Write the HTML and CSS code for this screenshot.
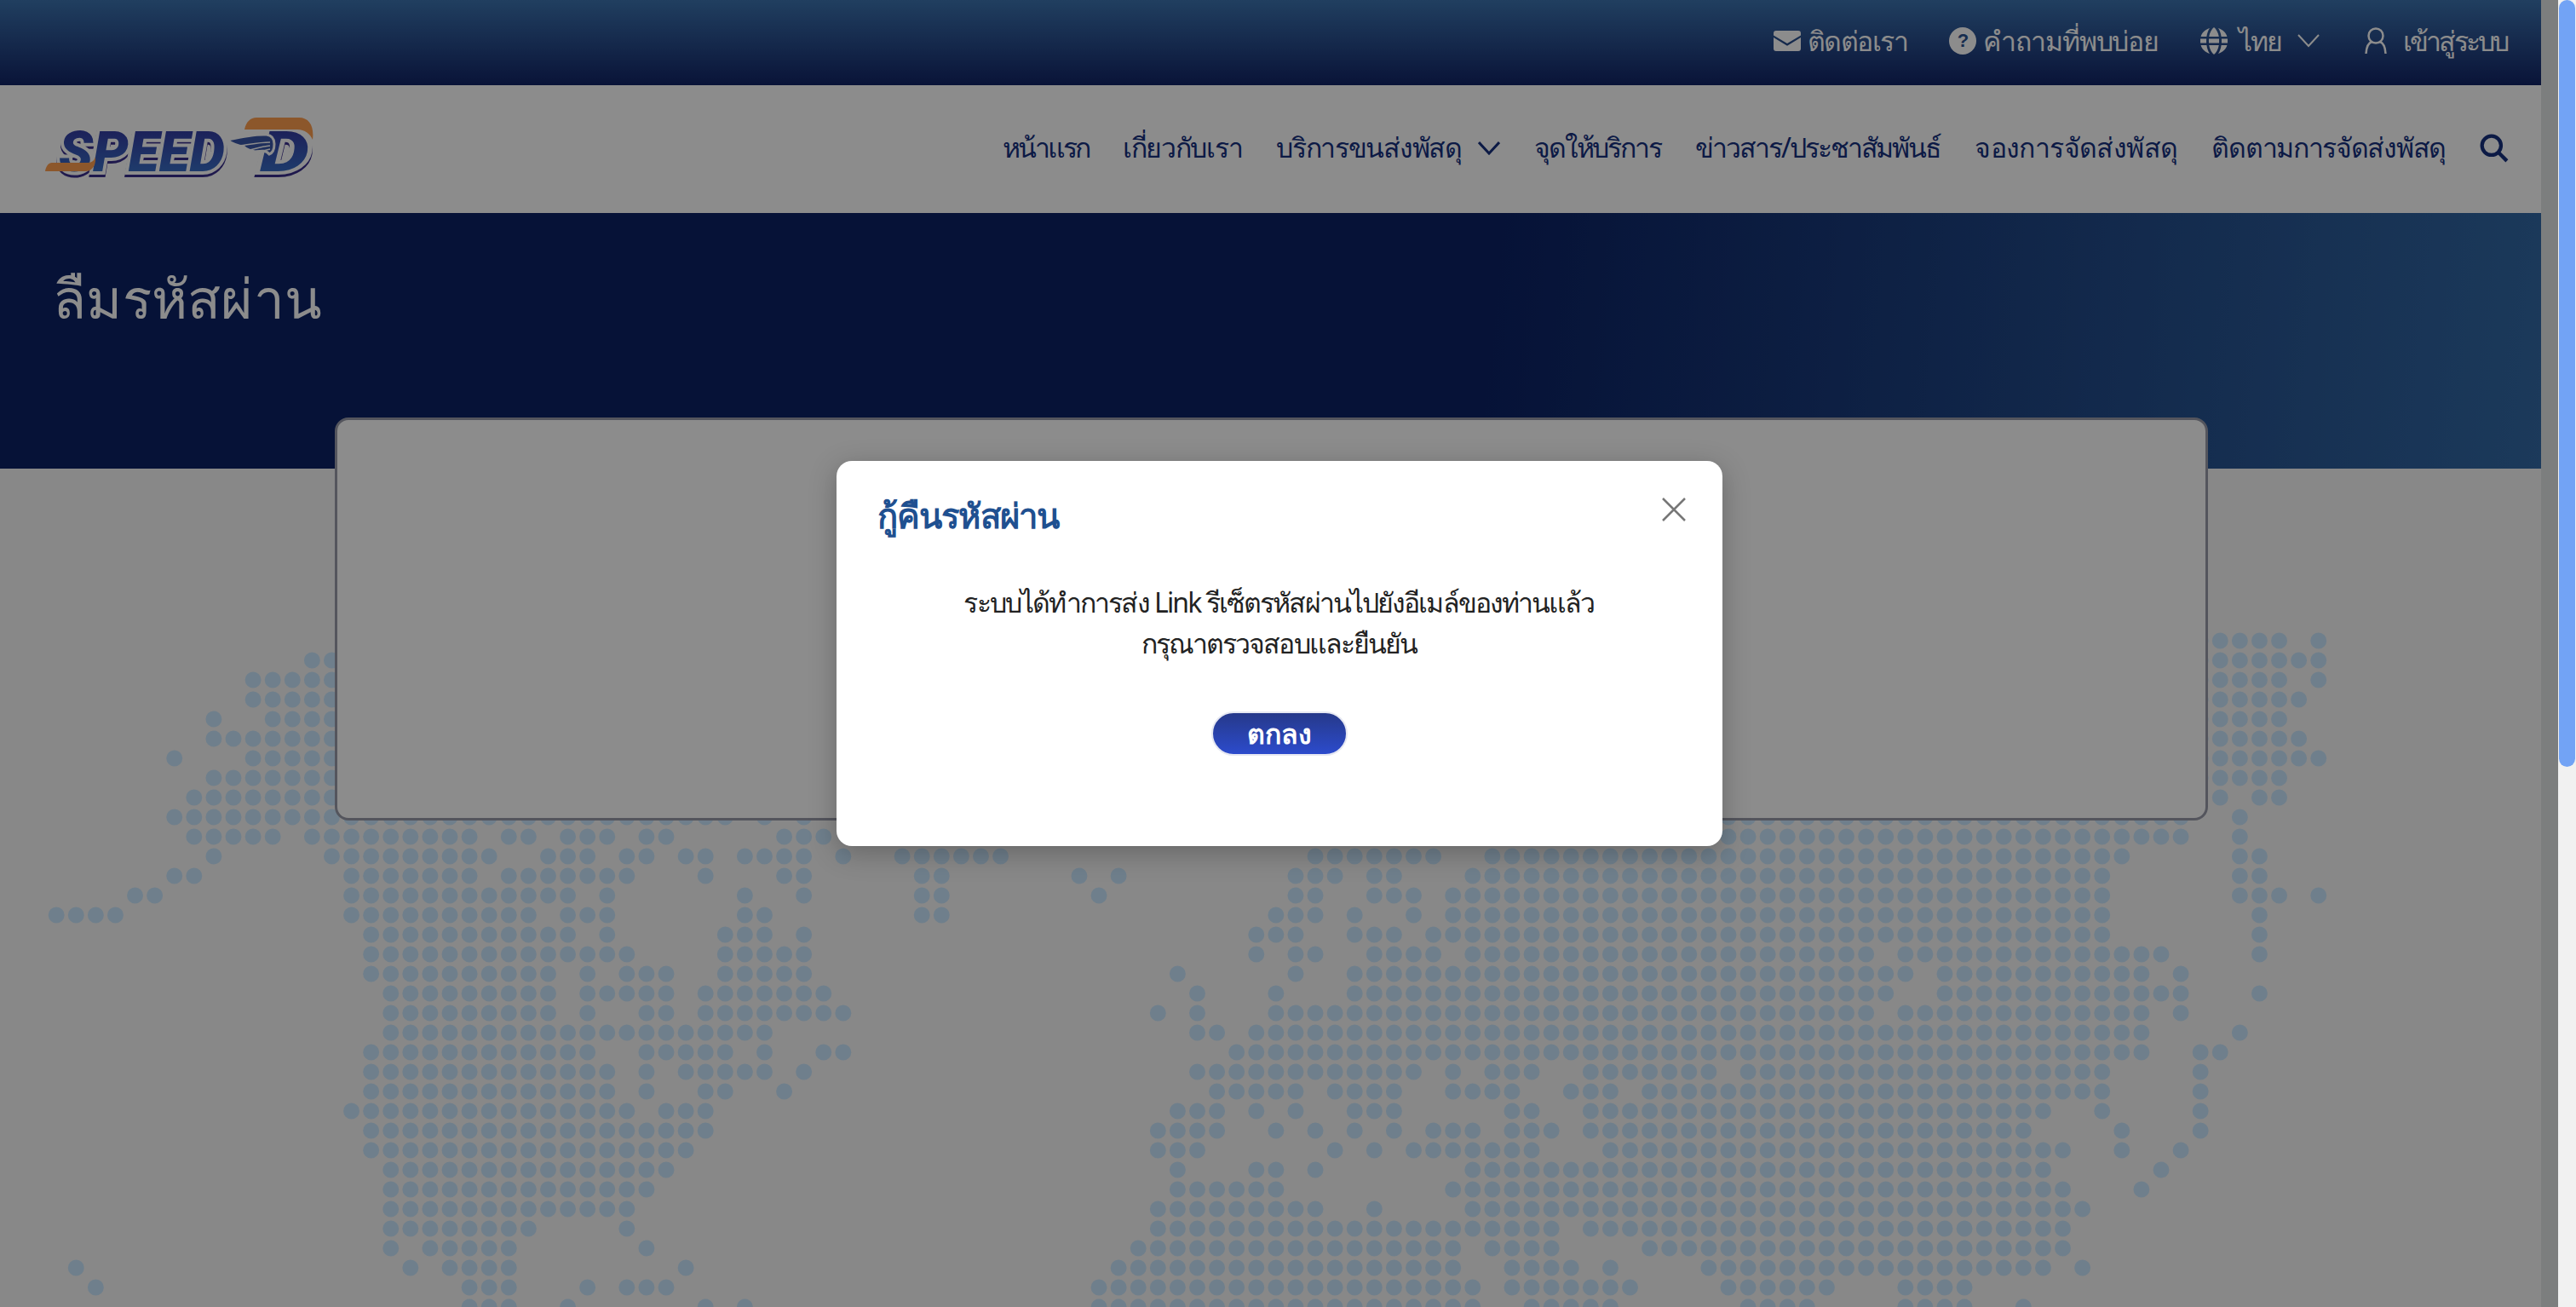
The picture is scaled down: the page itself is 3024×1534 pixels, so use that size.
FILE: index.html

```html
<!DOCTYPE html>
<html lang="th">
<head>
  <meta charset="UTF-8" />
  <meta name="viewport" content="width=device-width, initial-scale=1.0" />
  <title>ลืมรหัสผ่าน</title>
  <link rel="stylesheet" href="styles.css">
</head>
<body>
  <div class="shell">
    <div class="page">
      <div class="topbar">
        <a class="top-link top-contact">
          <svg class="top-icon" viewBox="0 0 32 24"><path d="M3 0h26a3 3 0 0 1 3 3v2.500L16 15 0 5.500V3a3 3 0 0 1 3-3zM0 8l16 9.800L32 8v13a3 3 0 0 1-3 3H3a3 3 0 0 1-3-3z"/></svg>
          ติดต่อเรา
        </a>
        <a class="top-link">
          <svg class="top-icon" viewBox="0 0 32 32"><circle cx="16" cy="16" r="16"/><text class="help-mark" x="16" y="23" text-anchor="middle">?</text></svg>
          คำถามที่พบบ่อย
        </a>
        <a class="top-link top-lang">
          <svg class="top-icon" viewBox="0 0 32 32"><path d="M11 1C5.500 2.800 1.800 6.500.600 11h6.800C8 7 9.200 3.500 11 1zM21 1c1.800 2.500 3 6 3.600 10h6.800C30.200 6.500 26.500 2.800 21 1zM16 0c-2.500 2-5 6-5.800 11h11.600C21 6 18.500 2 16 0zM0 13.500v5h7.100a50 50 0 0 1 0-5zM10 13.500a46 46 0 0 0 0 5h12a46 46 0 0 0 0-5zM24.900 13.500a50 50 0 0 1 0 5H32v-5zM.600 21c1.200 4.500 4.900 8.200 10.400 10-1.800-2.500-3-6-3.600-10zM10.200 21c.800 5 3.300 9 5.800 11 2.500-2 5-6 5.800-11zM24.600 21c-.600 4-1.800 7.500-3.600 10 5.500-1.800 9.200-5.500 10.400-10z"/></svg>
          ไทย
          <svg class="chevron" viewBox="0 0 26 16"><path d="M1 1l12 13L25 1"/></svg>
        </a>
        <a class="top-link top-login">
          <svg class="user-icon" viewBox="0 0 26 32"><circle cx="13" cy="10" r="8.500"/><path d="M1.500 31c.5-8 3.500-13 7-14M24.500 31c-.5-8-3.500-13-7-14"/></svg>
          เข้าสู่ระบบ
        </a>
      </div>

      <div class="navbar">
        <svg class="logo" viewBox="0 -10 330 100">
          <defs>
            <linearGradient id="logoBlue" x1="0" y1="0" x2="0" y2="1">
              <stop offset="0" stop-color="#33309a"/>
              <stop offset="1" stop-color="#3a7ccf"/>
            </linearGradient>
          </defs>
          <text class="logo-word" x="24" y="67">SPEED</text>
          <text class="logo-word" transform="translate(260 67) scale(1.4 1)">D</text>
          <path class="logo-orange" d="M16 57h42c5 0 8-3 9-7 1 9-3 17-12 17H8c1-6 4-10 8-10zM242 18c2-9 7-14 14-14h50c12 0 18 10 16 26-3-7-9-12-18-12z"/>
          <path class="logo-wing" d="M222 30c14-3 32-7 46-6 6 1 9 5 9 11 0 7-3 11-6 12-4-5-9-4-16-3-7-1-12-4-14-6-6 0-15-4-19-8z"/>
          <path class="logo-feather" d="M236 37c10-1 22-4 36-4M244 43c9-2 18-5 28-6M254 47c6-3 12-5 18-6"/>
        </svg>
        <nav class="menu">
          <a class="narrower">หน้าแรก</a>
          <a>เกี่ยวกับเรา</a>
          <a class="menu-drop">บริการขนส่งพัสดุ
            <svg class="chevron chevron-dark" viewBox="0 0 26 16"><path d="M1 1l12 13L25 1"/></svg>
          </a>
          <a class="narrow">จุดให้บริการ</a>
          <a class="narrow">ข่าวสาร/ประชาสัมพันธ์</a>
          <a class="wider">จองการจัดส่งพัสดุ</a>
          <a>ติดตามการจัดส่งพัสดุ</a>
          <svg class="search-icon" viewBox="0 0 32 32"><circle cx="13" cy="13" r="10.500"/><path d="M21 21l9 9"/></svg>
        </nav>
      </div>

      <div class="hero">
        <h1>ลืมรหัสผ่าน</h1>
      </div>

      <div class="content">
        <svg class="world-map" viewBox="-2 -1 120 37" preserveAspectRatio="none">
          <path d="M13 1H14.010M10 2H14.010M10 3H14.010M8 4h.01M11 4H14.010M8 5H14.010M6 6h.01M10 6H14.010M8 7H14.010M7 8H14.010M6 9H34.010M36 9h.01M38 9h.01M85 9H108.010M111 9h.01
            M7 10H11.010M13 10H21.010M23 10H24.010M26 10H28.010M30 10H31.010M37 10H39.010M85 10H108.010M111 10h.01
            M8 11h.01M14 11H22.010M25 11H27.010M29 11H30.010M32 11H33.010M35 11H38.010M40 11h.01M43 11H48.010M64 11H70.010M73 11H105.010M111 11H112.010
            M6 12H7.010M15 12H21.010M23 12H29.010M33 12h.01M37 12H38.010M44 12H45.010M52 12h.01M54 12h.01M63 12H65.010M67 12H68.010M72 12H104.010M111 12H112.010
            M4 13H5.010M15 13H26.010M28 13h.01M35 13h.01M38 13h.01M44 13H45.010M53 13h.01M63 13H64.010M67 13H69.010M71 13H104.010M111 13H113.010M115 13h.01
            M0 14H3.010M15 14H24.010M26 14H28.010M35 14H36.010M44 14H45.010M62 14H64.010M66 14h.01M69 14h.01M71 14H104.010M112 14h.01
            M16 15H26.010M28 15h.01M34 15H36.010M38 15h.01M61 15H63.010M66 15H68.010M70 15H104.010M112 15h.01
            M16 16H29.010M34 16H38.010M61 16h.01M63 16H64.010M67 16H70.010M72 16H92.010M94 16H107.010M112 16h.01
            M16 17H25.010M27 17h.01M29 17H31.010M34 17H38.010M57 17h.01M63 17h.01M66 17H94.010M96 17H106.010M108 17h.01
            M17 18H25.010M27 18H31.010M33 18H39.010M58 18h.01M62 18h.01M66 18H93.010M96 18H108.010M112 18h.01
            M17 19H25.010M27 19h.01M30 19H31.010M33 19H40.010M56 19h.01M58 19h.01M62 19H92.010M94 19H106.010M108 19h.01
            M17 20H36.010M58 20H59.010M61 20H106.010M111 20h.01
            M16 21H27.010M30 21H34.010M36 21h.01M39 21H40.010M60 21H106.010M109 21H110.010
            M16 22H28.010M30 22h.01M32 22H36.010M38 22h.01M58 22H69.010M71 22h.01M73 22H75.010M78 22H84.010M86 22H104.010M109 22h.01
            M16 23H28.010M30 23h.01M33 23H34.010M37 23h.01M59 23H63.010M65 23H68.010M71 23H74.010M77 23H79.010M81 23H104.010M109 23h.01
            M15 24H29.010M31 24H33.010M57 24H59.010M61 24h.01M63 24h.01M66 24H68.010M74 24H75.010M78 24H101.010M104 24h.01M109 24h.01
            M16 25H33.010M56 25H59.010M62 25h.01M64 25h.01M66 25h.01M68 25h.01M70 25H72.010M74 25H76.010M78 25H100.010M105 25h.01M109 25h.01
            M16 26H32.010M56 26H58.010M65 26h.01M67 26h.01M69 26H75.010M79 26H102.010M105 26h.01M108 26h.01
            M17 27H31.010M57 27h.01M61 27H62.010M64 27h.01M72 27H101.010M107 27h.01
            M17 28H30.010M57 28H62.010M71 28H102.010M106 28h.01
            M17 29H29.010M56 29H64.010M67 29h.01M72 29H103.010
            M17 30H24.010M29 30h.01M56 30H76.010M78 30H102.010
            M17 31h.01M19 31H23.010M30 31h.01M55 31H71.010M73 31H76.010M81 31H102.010
            M18 32h.01M20 32H23.010M1 32h.01M32 32h.01M54 32H71.010M74 32H77.010M79 32h.01M84 32H101.010M103 32h.01
            M2 33h.01M21 33H23.010M27 33h.01M29 33H31.010M53 33H72.010M74 33H80.010M85 33H90.010M94 33H97.010
            M21 34H23.010M26 34h.01M33 34h.01M35 34h.01M53 34H72.010M75 34H79.010M86 34H89.010M94 34H97.010M100 34h.01
            M109 0H113.010M115 0h.01M109 1H115.010M109 2H113.010M115 2h.01M109 3H114.010M109 4H113.010M109 5H114.010M109 6H115.010M109 7H113.010M110 8h.01M112 8H113.010"/>
        </svg>
        <div class="card"></div>
      </div>
    </div>

    <div class="overlay">
      <div class="modal">
        <div class="modal-head">
          <h2>กู้คืนรหัสผ่าน</h2>
          <svg class="close-icon" viewBox="0 0 28 28"><path d="M1 1l26 26M27 1L1 27"/></svg>
        </div>
        <div class="modal-body">
          <p>ระบบได้ทำการส่ง Link รีเซ็ตรหัสผ่านไปยังอีเมล์ของท่านแล้ว</p>
          <p>กรุณาตรวจสอบและยืนยัน</p>
          <button>ตกลง</button>
        </div>
      </div>
    </div>
  </div>

  <div class="scrollbar"><div class="thumb"></div></div>
</body>
</html>
```

FILE: styles.css

```css
body {
  margin: 0;
  height: 100vh;
  display: flex;
  overflow: hidden;
  font-family: 'Noto Sans', 'Noto Sans CJK SC', 'DejaVu Sans', sans-serif;
  color: #222;
}
.shell {
  flex: 1;
  position: relative;
  padding-right: 20px;
  background: #e2e5e5;
  overflow: hidden;
}
.page {
  height: 100%;
  background: #f7f7f7;
  overflow: hidden;
}

.topbar {
  height: 100px;
  box-sizing: border-box;
  padding: 0 40px 4px 0;
  display: flex;
  justify-content: flex-end;
  align-items: center;
  gap: 49px;
  background: linear-gradient(#3c73af, #122466);
  color: #fff;
  font-size: 32px;
  letter-spacing: -1.1px;
}
.top-link {
  display: flex;
  align-items: center;
  gap: 8px;
}
.top-contact { letter-spacing: -1.5px; }
.top-lang {
  gap: 13px;
  letter-spacing: -2px;
}
.top-login {
  gap: 19px;
  margin-left: 4px;
  letter-spacing: -2.900px;
}
.top-icon {
  width: 32px;
  height: 32px;
  fill: #fff;
}
.help-mark {
  font-family: 'Liberation Sans', sans-serif;
  font-size: 22px;
  font-weight: bold;
  fill: #2a5290;
}
.chevron {
  width: 26px;
  height: 16px;
  margin-left: 6px;
  fill: none;
  stroke: #fff;
  stroke-width: 2;
}
.chevron-dark {
  margin-left: 19px;
  stroke: #16307f;
  stroke-width: 3;
}
.user-icon {
  width: 26px;
  height: 32px;
  fill: none;
  stroke: #fff;
  stroke-width: 2.500;
}

.navbar {
  height: 150px;
  box-sizing: border-box;
  display: flex;
  justify-content: space-between;
  align-items: center;
  padding: 0 38px 3px 45px;
  background: #fff;
}
.logo {
  width: 330px;
  height: 100px;
}
.logo-word {
  font-family: Roboto, sans-serif;
  font-size: 66px;
  font-weight: 900;
  font-style: italic;
  fill: url(#logoBlue);
  stroke: #fff;
  stroke-width: 8;
  paint-order: stroke;
  filter: drop-shadow(0 3px 0 #3a2f8c);
}
.logo-orange { fill: #ff9e4f; }
.logo-wing {
  fill: #3a56a8;
  stroke: #fff;
  stroke-width: 3;
}
.logo-feather {
  fill: none;
  stroke: #fff;
  stroke-width: 1.500;
}
.menu {
  display: flex;
  align-items: center;
  gap: 40px;
  color: #16307f;
  font-size: 32px;
  letter-spacing: -1.3px;
}
.menu .narrow { letter-spacing: -2.050px; }
.menu .narrower { letter-spacing: -2.900px; }
.menu .wider { letter-spacing: -.6px; }
.menu-drop {
  display: flex;
  align-items: center;
}
.search-icon {
  width: 34px;
  height: 34px;
  fill: none;
  stroke: #16307f;
  stroke-width: 4;
}

.hero {
  height: 300px;
  box-sizing: border-box;
  padding: 52px 62px 0;
  background: linear-gradient(96deg, #0b2164 58%, #336aa6 100%);
  color: #fff;
}
.hero h1 {
  margin: 0;
  font-size: 64px;
  font-weight: 500;
  line-height: 96px;
  letter-spacing: .3px;
}

/* map sits behind the card, dots are zero length dashes on each run */
.content {
  display: flow-root;
  position: relative;
  height: 984px;
}
.world-map {
  position: absolute;
  left: 20px;
  top: 179px;
  width: 2771px;
  height: 851px;
  fill: none;
  stroke: #cae8ff;
  stroke-width: .82;
  stroke-linecap: round;
  stroke-dasharray: 0 1;
}
.card {
  position: relative;
  box-sizing: border-box;
  width: 2199px;
  height: 473px;
  margin: -60px 0 0 393px;
  background: #fff;
  border: 3px solid #999caa;
  border-radius: 16px;
}

.overlay {
  position: absolute;
  inset: 0;
  display: flex;
  justify-content: center;
  align-items: center;
  background: rgba(0, 0, 0, .45);
}
.modal {
  box-sizing: border-box;
  width: 1040px;
  height: 452px;
  padding: 34px 48px 0;
  background: #fff;
  border-radius: 18px;
  box-shadow: 0 8px 32px rgba(0, 0, 0, .25);
}
.modal-head {
  display: flex;
  justify-content: space-between;
  align-items: flex-start;
}
.modal-head h2 {
  margin: 0;
  color: #1f5090;
  font-size: 40px;
  line-height: 60px;
  letter-spacing: -.8px;
}
.close-icon {
  width: 28px;
  height: 28px;
  margin: 9px -5px 0 0;
  fill: none;
  stroke: #777;
  stroke-width: 2.500;
}
.modal-body {
  margin-top: 48px;
  text-align: center;
  font-size: 32px;
  line-height: 48px;
  letter-spacing: -1.900px;
}
.modal-body p { margin: 0; }
button {
  display: block;
  width: 160px;
  height: 52px;
  margin: 56px auto 0;
  padding: 0;
  border: 2px solid #e6e8f2;
  border-radius: 26px;
  background: linear-gradient(#26398a, #2c4bcc);
  color: #fff;
  font: bold 32px/44px 'Noto Sans', sans-serif;
}

.scrollbar {
  width: 21px;
  background: #f1f1f1;
}
.thumb {
  width: 19px;
  height: 900px;
  margin-left: 1px;
  background: #72a3f5;
  border-radius: 10px;
}
```
